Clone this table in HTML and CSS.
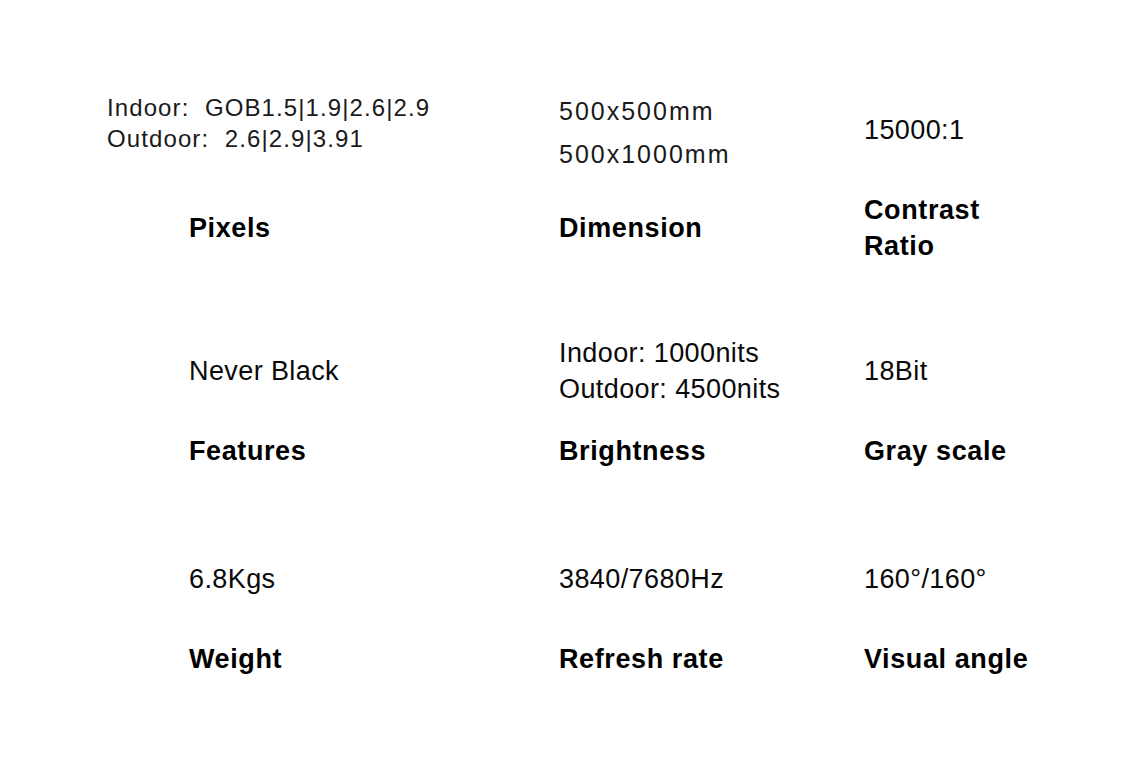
FILE: index.html
```html
<!DOCTYPE html>
<html lang="en">
<head>
<meta charset="utf-8">
<title>Specifications</title>
<link rel="stylesheet" href="styles.css">
</head>
<body>
<main class="sheet">
  <section class="row row-first">
    <div class="spec">
      <div class="val val-tall">
        <div class="pitch">
          <div>Indoor:&nbsp; GOB1.5|1.9|2.6|2.9</div>
          <div>Outdoor:&nbsp; 2.6|2.9|3.91</div>
        </div>
      </div>
      <div class="lbl">Pixels</div>
    </div>
    <div class="spec">
      <div class="val val-tall">
        <div class="dims">
          <div>500x500mm</div>
          <div>500x1000mm</div>
        </div>
      </div>
      <div class="lbl">Dimension</div>
    </div>
    <div class="spec">
      <div class="val val-tall">15000:1</div>
      <div class="lbl lbl-two">Contrast<br>Ratio</div>
    </div>
  </section>

  <section class="row">
    <div class="spec">
      <div class="val">Never Black</div>
      <div class="lbl">Features</div>
    </div>
    <div class="spec">
      <div class="val">
        <div class="two">
          <div>Indoor: 1000nits</div>
          <div>Outdoor: 4500nits</div>
        </div>
      </div>
      <div class="lbl">Brightness</div>
    </div>
    <div class="spec">
      <div class="val">18Bit</div>
      <div class="lbl">Gray scale</div>
    </div>
  </section>

  <section class="row">
    <div class="spec">
      <div class="val">6.8Kgs</div>
      <div class="lbl">Weight</div>
    </div>
    <div class="spec">
      <div class="val">3840/7680Hz</div>
      <div class="lbl">Refresh rate</div>
    </div>
    <div class="spec">
      <div class="val">160°/160°</div>
      <div class="lbl">Visual angle</div>
    </div>
  </section>
</main>
</body>
</html>
```

FILE: styles.css
```css
html, body {
  margin: 0;
  padding: 0;
  background: #ffffff;
}

body {
  font-family: "Liberation Sans", Arial, sans-serif;
  color: #0a0a0a;
}

.sheet {
  width: 1146px;
  height: 765px;
  box-sizing: border-box;
  padding: 72px 0 0 189px;
}

.row {
  display: grid;
  grid-template-columns: 370px 305px 1fr;
  margin-bottom: 48px;
}

.row-first {
  margin-bottom: 63px;
}

.spec {
  display: flex;
  flex-direction: column;
}

.val {
  height: 80px;
  display: flex;
  align-items: center;
  font-size: 27px;
  letter-spacing: 0.4px;
  line-height: 36px;
  white-space: nowrap;
}

.val-tall {
  height: 116px;
}

.lbl {
  height: 80px;
  display: flex;
  align-items: center;
  font-size: 27px;
  font-weight: bold;
  letter-spacing: 0.6px;
  line-height: 36px;
  white-space: nowrap;
  color: #000000;
}

.pitch {
  margin-left: -82px;
  margin-bottom: 15px;
  font-size: 24px;
  letter-spacing: 1.1px;
  line-height: 31px;
  color: #1a1a1a;
}

.dims {
  margin-top: 5px;
  font-size: 25px;
  letter-spacing: 2px;
  line-height: 43px;
  color: #1a1a1a;
}

.two {
  line-height: 36px;
}
```
